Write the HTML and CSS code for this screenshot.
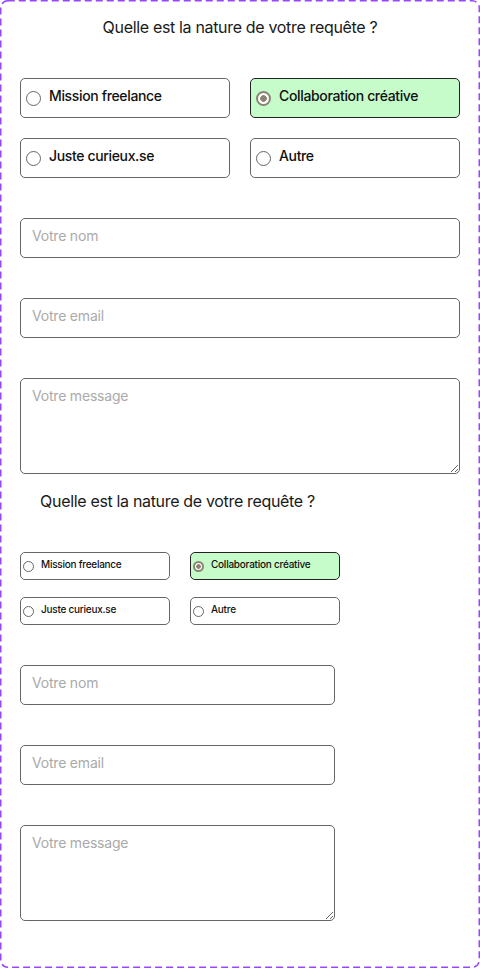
FILE: index.html
```html
<!DOCTYPE html>
<html lang="fr">
<head>
<meta charset="utf-8">
<title>Contact</title>
<link rel="stylesheet" href="styles.css">
</head>
<body>
<div class="frame">
  <svg class="frame__outline" width="480" height="968" viewBox="0 0 480 968" aria-hidden="true">
    <rect x="0.75" y="0.75" width="478.5" height="966.5" rx="7" ry="7" fill="none" stroke="#9747ff" stroke-width="1.5" stroke-dasharray="7 4"/>
  </svg>
  <form class="contact contact--lg">
    <p class="title">Quelle est la nature de votre requête ?</p>
    <div class="options">
      <label class="option"><input class="radio" type="radio" name="n1"><span>Mission freelance</span></label>
      <label class="option option--on"><input class="radio" type="radio" name="n1" checked><span>Collaboration créative</span></label>
      <label class="option"><input class="radio" type="radio" name="n1"><span>Juste curieux.se</span></label>
      <label class="option"><input class="radio" type="radio" name="n1"><span>Autre</span></label>
    </div>
    <input class="field" type="text" placeholder="Votre nom">
    <input class="field" type="email" placeholder="Votre email">
    <textarea class="field area" placeholder="Votre message"></textarea>
  </form>
  <form class="contact contact--sm">
    <p class="title">Quelle est la nature de votre requête ?</p>
    <div class="options">
      <label class="option"><input class="radio" type="radio" name="n2"><span>Mission freelance</span></label>
      <label class="option option--on"><input class="radio" type="radio" name="n2" checked><span>Collaboration créative</span></label>
      <label class="option"><input class="radio" type="radio" name="n2"><span>Juste curieux.se</span></label>
      <label class="option"><input class="radio" type="radio" name="n2"><span>Autre</span></label>
    </div>
    <input class="field" type="text" placeholder="Votre nom">
    <input class="field" type="email" placeholder="Votre email">
    <textarea class="field area" placeholder="Votre message"></textarea>
  </form>
</div>
</body>
</html>
```
FILE: styles.css
```css
* { box-sizing: border-box; }
body {
  margin: 0;
  background: #fff;
  font-family: Inter, "Noto Sans", sans-serif;
  color: #111;
}
.frame {
  position: relative;
  width: 480px;
  height: 968px;
  padding: 17px 20px 0;
}
.frame__outline {
  position: absolute;
  left: 0;
  top: 0;
  pointer-events: none;
}
.contact { position: relative; display: flex; flex-direction: column; }
.contact--lg { width: 440px; }
.contact--sm { width: 315px; margin-top: 17px; }
.title {
  margin: 0;
  font-size: 16px;
  line-height: 20px;
  font-weight: 400;
  letter-spacing: -0.33px;
  text-align: center;
  color: #1a1a1a;
}
.options {
  display: grid;
  margin-top: 41px;
}
.contact--lg .options { grid-template-columns: 210px 210px; gap: 20px; }
.contact--sm .options { grid-template-columns: 150px 150px; column-gap: 20px; row-gap: 17px; }
.option {
  display: flex;
  align-items: flex-start;
  border: 1px solid #666;
  border-radius: 5px;
  font-weight: 500;
  color: #111;
  background: #fff;
}
.option--on { background: #c5fcca; border-color: #222; }
.contact--lg .option { height: 40px; padding: 8px 0 0 5px; font-size: 14px; line-height: 17px; letter-spacing: -0.35px; }
.contact--sm .option { height: 28px; padding: 5px 0 0 2px; font-size: 10px; line-height: 12px; letter-spacing: -0.25px; }
.radio {
  appearance: none;
  -webkit-appearance: none;
  margin: 0;
  flex: none;
  border: 1px solid #666;
  border-radius: 50%;
  background: #fff;
}
.contact--lg .radio { width: 15px; height: 15px; margin: 4px 8px 0 0; }
.contact--sm .radio { width: 11px; height: 11px; margin: 3px 7px 0 0; }
.radio:checked { border: 2px solid #8b8474; }
.contact--lg .radio:checked { background: radial-gradient(circle, #8b8474 0 3px, #fff 3.6px); }
.contact--sm .radio:checked { background: radial-gradient(circle, #8b8474 0 2px, #fff 2.6px); }
.field {
  display: block;
  width: 100%;
  height: 40px;
  margin: 40px 0 0;
  border: 1px solid #666;
  border-radius: 5px;
  padding: 0 11px 6px;
  font-family: inherit;
  font-size: 14px;
  letter-spacing: -0.2px;
  color: #111;
  background: #fff;
  outline: none;
}
.field::placeholder { color: #aaa; }
.area {
  height: 96px;
  padding: 8px 11px;
  line-height: 17px;
  resize: both;
}
```
